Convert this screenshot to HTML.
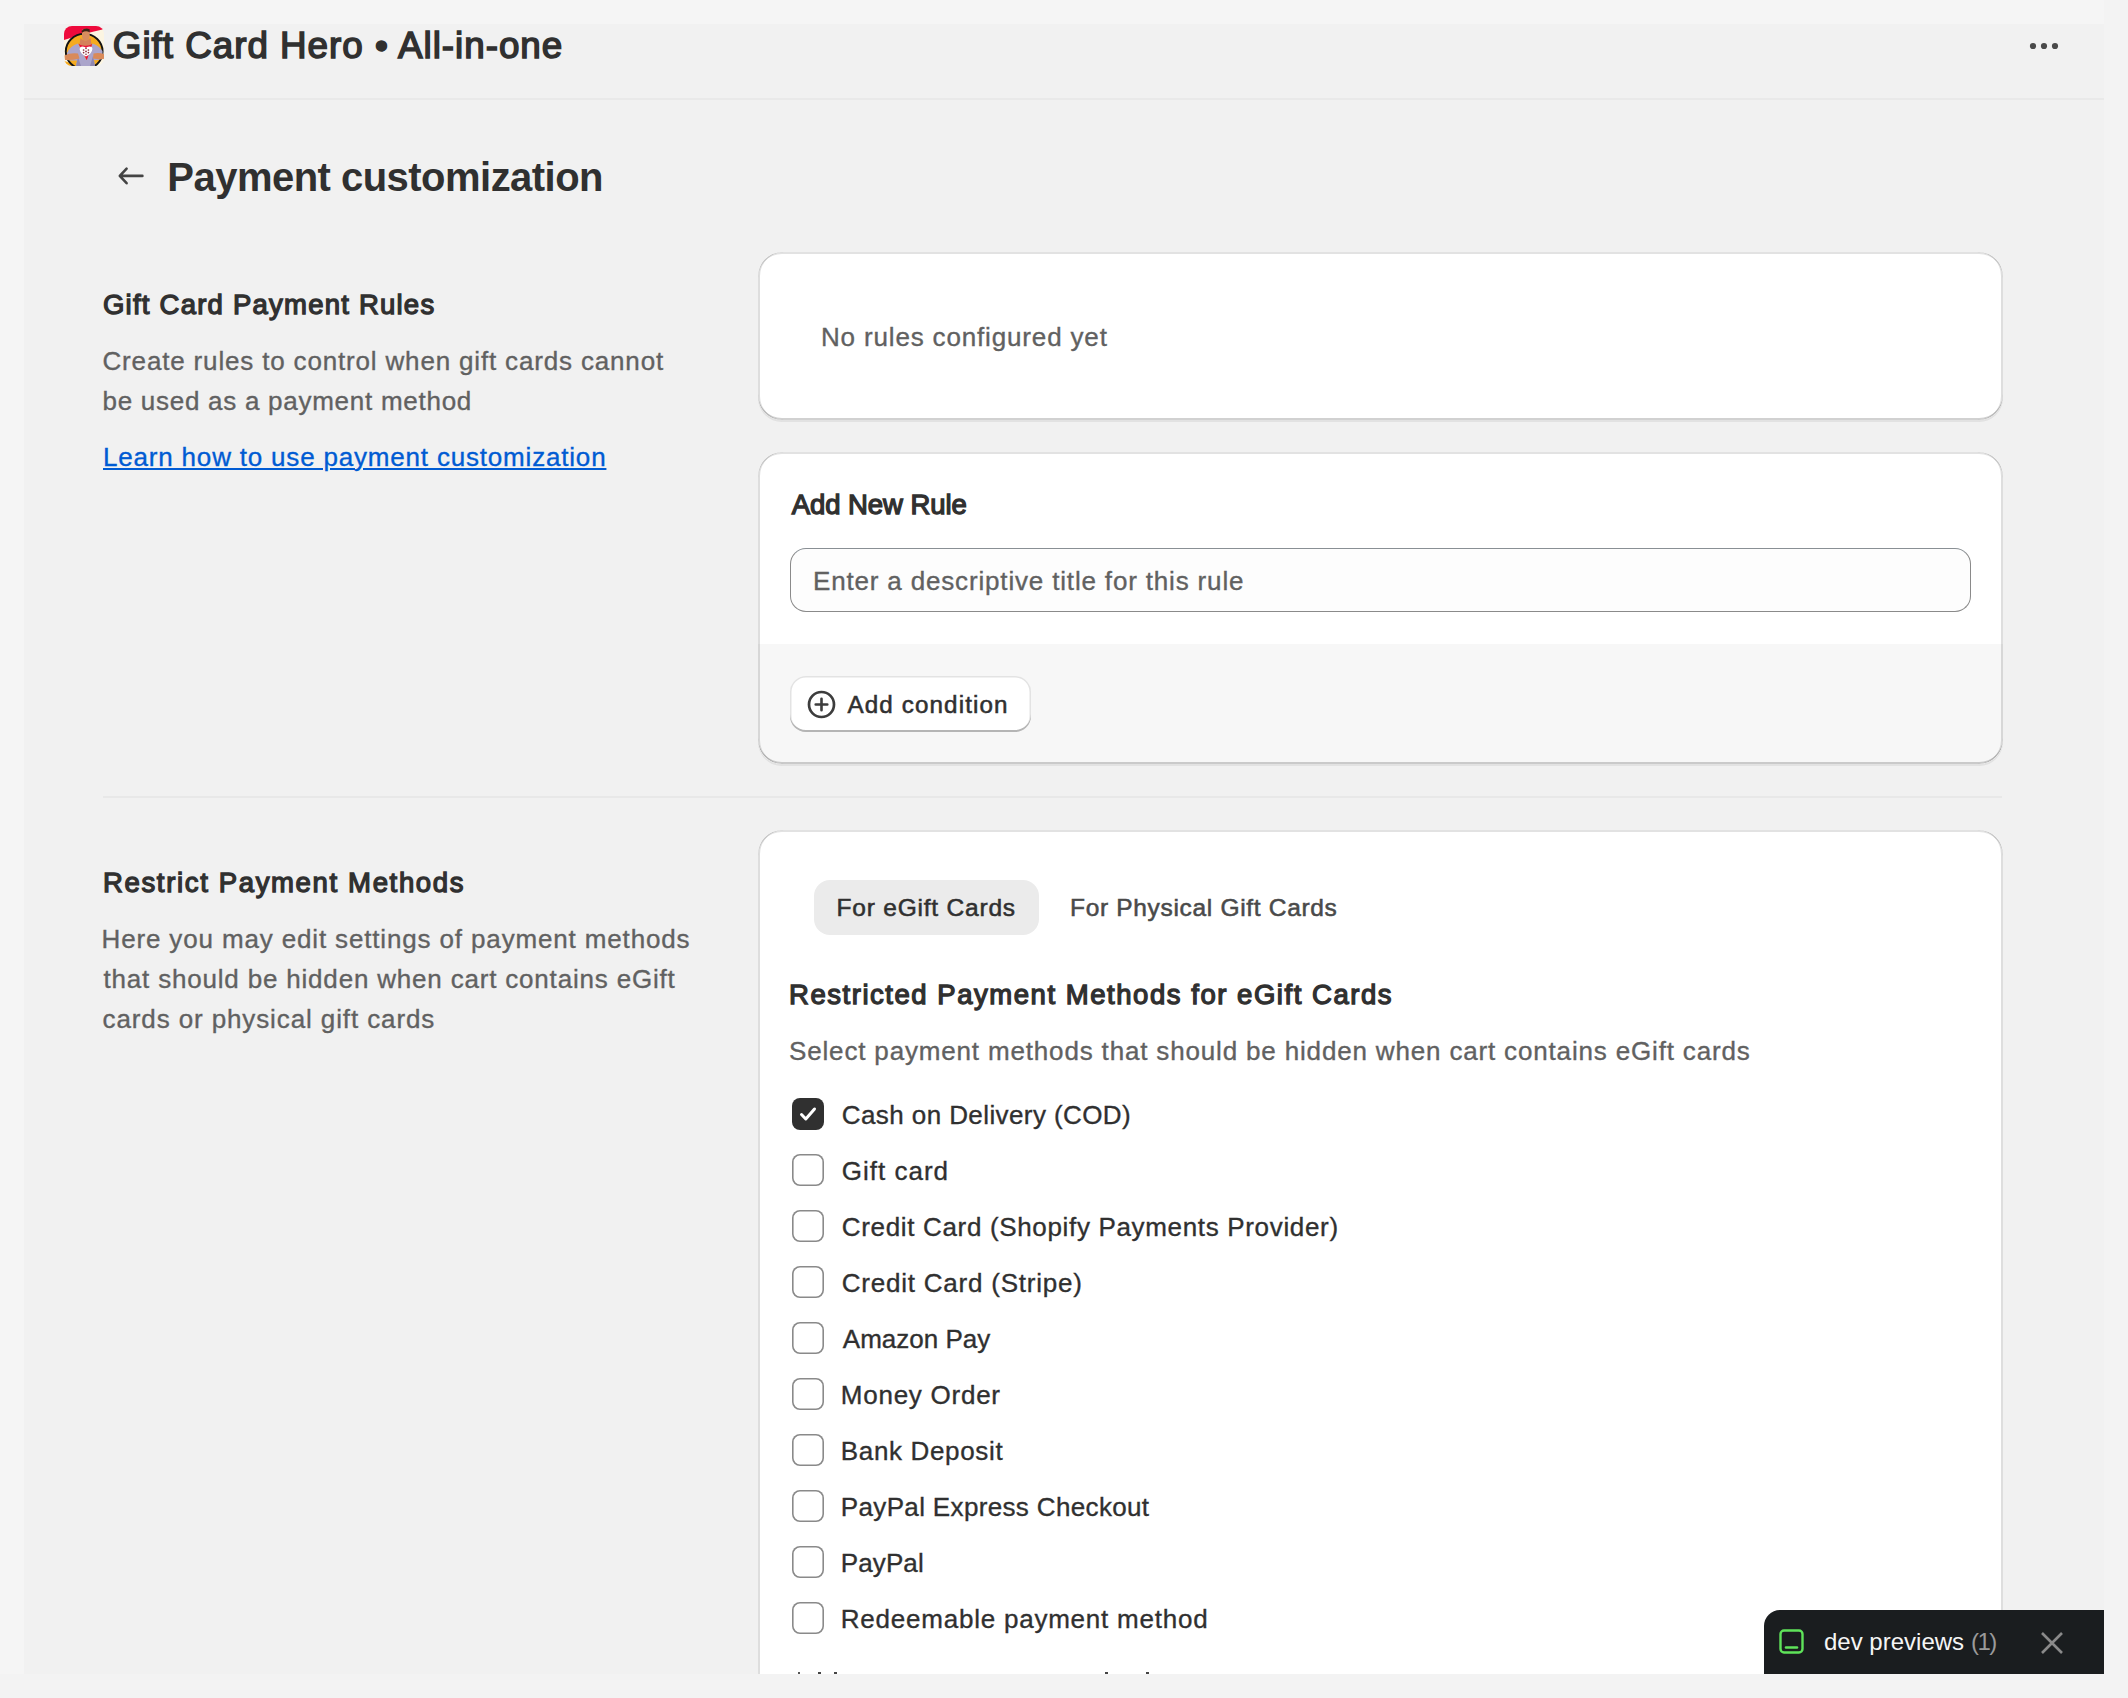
<!DOCTYPE html>
<html>
<head>
<meta charset="utf-8">
<style>
html,body{margin:0;padding:0;}
body{width:2128px;height:1698px;overflow:hidden;background:#f5f5f5;font-family:"Liberation Sans",sans-serif;position:relative;}
.frame{position:absolute;left:24px;top:24px;width:2080px;height:1650px;background:#f1f1f1;}
.t{position:absolute;white-space:nowrap;line-height:1;}
.hdrline{position:absolute;left:24px;top:98px;width:2080px;height:2px;background:#e9e9e9;}
.card{position:absolute;left:758px;width:1245px;background:#fff;border-radius:24px;box-shadow:0 2px 0 0 rgba(26,26,26,.07);overflow:hidden;}
.card::after{content:"";position:absolute;inset:0;border-radius:24px;pointer-events:none;
 box-shadow:inset 2px 0 0 0 rgba(0,0,0,.13),inset -2px 0 0 0 rgba(0,0,0,.13),inset 0 -2px 0 0 rgba(0,0,0,.18),inset 0 2px 0 0 rgba(190,190,190,.45);}
.cb{position:absolute;left:792px;width:32px;height:32px;box-sizing:border-box;box-shadow:inset 0 0 0 1.6px #8a8a8a;border-radius:8px;background:#fff;}
</style>
</head>
<body>
<div class="frame"></div>
<div class="hdrline"></div>

<!-- app icon -->
<svg style="position:absolute;left:64px;top:26px" width="40" height="40" viewBox="0 0 40 40">
 <defs><clipPath id="rc"><rect x="0" y="0" width="40" height="40" rx="8"/></clipPath></defs>
 <g clip-path="url(#rc)">
  <rect width="40" height="40" fill="#fcf5e2"/>
  <path d="M0 0H40V2.5L38.5 3.5Q22 7 0 14Z" fill="#ee0a3c"/>
  <path d="M0 35Q6 36 9 40H0Z" fill="#f5ab1f"/>
  <ellipse cx="20.2" cy="25.5" rx="18.4" ry="17.6" fill="#f5ab1f" stroke="#141414" stroke-width="1.9"/>
  <path d="M3 27Q6 20 14 17.5L22.5 34L28.5 17.5Q35 19.5 38.5 25L38.5 33Q33 34.5 30 34L31 40H12L13 34.5Q7 34.5 3 34Z" fill="#aba5cb"/>
  <path d="M12 40L14 31L17 40Z" fill="#8f88b0"/>
  <path d="M31 40L29 30L26 40Z" fill="#8f88b0"/>
  <path d="M14.5 17.8Q21 20.5 28.2 17.8L22.8 34.2Z" fill="#ea1238"/>
  <path d="M15.6 23Q15.8 20.6 18.5 20.6Q21.3 20.8 22 22Q22.7 20.8 25.5 20.6Q28.3 20.6 28.4 23Q28 27.5 22 30.6Q16 27.5 15.6 23Z" fill="#fff"/>
  <g fill="#8a2a3a"><circle cx="22" cy="22.5" r="0.8"/><circle cx="19.6" cy="24" r="0.85"/><circle cx="24.4" cy="24" r="0.85"/><circle cx="22" cy="25.4" r="0.9"/><circle cx="19.6" cy="26.6" r="0.85"/><circle cx="24.4" cy="26.6" r="0.85"/><circle cx="22" cy="28.2" r="0.8"/></g>
  <path d="M16.5 12Q21 17 26.5 12L27.5 18.5Q21 21 15.5 18.5Z" fill="#d5805a"/>
  <path d="M18 4Q21.5 1.8 25 3.8L25.8 10Q25 14.5 21.5 15Q18.5 14.5 18 11Z" fill="#d98c5e"/>
  <path d="M17.5 5Q21 1 25.8 3.6L25.6 6.2Q21.5 4.2 18 6.8Z" fill="#3a2418"/>
  <path d="M0.5 29.5Q6 26.5 14 27.5L15.5 32.5Q8 34.5 1 34Z" fill="#d98a5a"/>
  <path d="M40 28Q35 26.5 29.5 27.5L29 32.5Q35 33.5 40 33Z" fill="#d98a5a"/>
 </g>
</svg>
<!-- dots -->
<svg style="position:absolute;left:2026px;top:39px" width="36" height="14" viewBox="0 0 36 14">
 <circle cx="7" cy="7" r="3.1" fill="#4a4a4a"/><circle cx="18" cy="7" r="3.1" fill="#4a4a4a"/><circle cx="29" cy="7" r="3.1" fill="#4a4a4a"/>
</svg>

<!-- back arrow -->
<svg style="position:absolute;left:112px;top:160px" width="38" height="32" viewBox="0 0 38 32">
 <path d="M30.4 15.9 H8.5 M14.6 8.6 L7.8 15.9 L14.6 23.2" fill="none" stroke="#444" stroke-width="2.6" stroke-linecap="round" stroke-linejoin="round"/>
</svg>

<!-- card 1 -->
<div class="card" style="top:252px;height:168px;"></div>

<!-- card 2 -->
<div class="card" style="top:452px;height:312px;">
 <div style="position:absolute;left:32px;top:96px;width:1181px;height:64px;box-sizing:border-box;border:1.3px solid #8a8a8a;border-top-color:#898f94;border-radius:16px;background:#fdfdfd;"></div>
 <div style="position:absolute;left:0;top:192px;width:100%;height:120px;background:#f7f7f7;"></div>
 <div style="position:absolute;left:32px;top:224px;width:241px;height:56px;box-sizing:border-box;background:#fff;border-radius:16px;box-shadow:inset 0 -2px 0 0 #b5b5b5,inset 0 0 0 1.5px #e3e3e3;"></div>
 <svg style="position:absolute;left:49px;top:237.5px" width="29" height="29" viewBox="0 0 29 29">
  <circle cx="14.5" cy="14.5" r="12.5" fill="none" stroke="#3d3d3d" stroke-width="2.7"/>
  <path d="M14.5 8.7V20.3M8.7 14.5H20.3" stroke="#3d3d3d" stroke-width="2.6" stroke-linecap="round"/>
 </svg>
</div>

<!-- divider -->
<div style="position:absolute;left:103px;top:796px;width:1899px;height:2px;background:#e8e8e8"></div>

<!-- card 3 -->
<div class="card" style="top:830px;height:1000px;">
 <div style="position:absolute;left:56px;top:50px;width:225px;height:55px;background:#ebebeb;border-radius:16px"></div>
</div>

<!-- checkboxes -->
<div class="cb" style="top:1098px;background:#303030;box-shadow:none"></div>
<svg style="position:absolute;left:792px;top:1098px" width="32" height="32" viewBox="0 0 32 32"><path d="M9.5 16.5 L13.8 21 L22.5 11" fill="none" stroke="#fff" stroke-width="3" stroke-linecap="round" stroke-linejoin="round"/></svg>
<div class="cb" style="top:1154px"></div>
<div class="cb" style="top:1210px"></div>
<div class="cb" style="top:1266px"></div>
<div class="cb" style="top:1322px"></div>
<div class="cb" style="top:1378px"></div>
<div class="cb" style="top:1434px"></div>
<div class="cb" style="top:1490px"></div>
<div class="cb" style="top:1546px"></div>
<div class="cb" style="top:1602px"></div>

<div class="t" style="left:112.8px;top:28.05px;font-size:36.8px;font-weight:400;-webkit-text-stroke:1.5px currentColor;color:#303030;letter-spacing:0.981px;">Gift Card Hero • All-in-one</div>
<div class="t" style="left:167.3px;top:157.34px;font-size:40px;font-weight:700;color:#303030;letter-spacing:-0.525px;">Payment customization</div>
<div class="t" style="left:103.0px;top:290.72px;font-size:27.5px;font-weight:400;-webkit-text-stroke:1.3px currentColor;color:#303030;letter-spacing:1.227px;">Gift Card Payment Rules</div>
<div class="t" style="left:102.5px;top:347.99px;font-size:26px;font-weight:400;-webkit-text-stroke:0.35px currentColor;color:#616161;letter-spacing:0.833px;">Create rules to control when gift cards cannot</div>
<div class="t" style="left:102.5px;top:387.99px;font-size:26px;font-weight:400;-webkit-text-stroke:0.35px currentColor;color:#616161;letter-spacing:0.731px;">be used as a payment method</div>
<div class="t" style="left:103.0px;top:443.99px;font-size:26px;font-weight:400;-webkit-text-stroke:0.35px currentColor;color:#005bd3;letter-spacing:0.811px;text-decoration:underline;text-decoration-thickness:2px;text-underline-offset:2px;">Learn how to use payment customization</div>
<div class="t" style="left:821.0px;top:323.99px;font-size:26px;font-weight:400;-webkit-text-stroke:0.35px currentColor;color:#616161;letter-spacing:0.841px;">No rules configured yet</div>
<div class="t" style="left:791.8px;top:490.72px;font-size:27.5px;font-weight:400;-webkit-text-stroke:1.3px currentColor;color:#303030;letter-spacing:-0.073px;">Add New Rule</div>
<div class="t" style="left:813.0px;top:568.49px;font-size:26px;font-weight:400;-webkit-text-stroke:0.35px currentColor;color:#616161;letter-spacing:0.832px;">Enter a descriptive title for this rule</div>
<div class="t" style="left:847.4px;top:692.51px;font-size:24.2px;font-weight:400;-webkit-text-stroke:0.55px currentColor;color:#303030;letter-spacing:1.133px;">Add condition</div>
<div class="t" style="left:103.0px;top:868.72px;font-size:27.5px;font-weight:400;-webkit-text-stroke:1.3px currentColor;color:#303030;letter-spacing:1.652px;">Restrict Payment Methods</div>
<div class="t" style="left:101.5px;top:926.49px;font-size:26px;font-weight:400;-webkit-text-stroke:0.35px currentColor;color:#616161;letter-spacing:0.852px;">Here you may edit settings of payment methods</div>
<div class="t" style="left:103.5px;top:965.99px;font-size:26px;font-weight:400;-webkit-text-stroke:0.35px currentColor;color:#616161;letter-spacing:0.811px;">that should be hidden when cart contains eGift</div>
<div class="t" style="left:102.5px;top:1005.99px;font-size:26px;font-weight:400;-webkit-text-stroke:0.35px currentColor;color:#616161;letter-spacing:0.889px;">cards or physical gift cards</div>
<div class="t" style="left:836.6px;top:896.26px;font-size:24.5px;font-weight:400;-webkit-text-stroke:0.55px currentColor;color:#303030;letter-spacing:0.786px;">For eGift Cards</div>
<div class="t" style="left:1070.0px;top:896.26px;font-size:24.5px;font-weight:400;-webkit-text-stroke:0.55px currentColor;color:#4a4a4a;letter-spacing:0.682px;">For Physical Gift Cards</div>
<div class="t" style="left:789.0px;top:981.22px;font-size:27.5px;font-weight:400;-webkit-text-stroke:1.3px currentColor;color:#303030;letter-spacing:1.537px;">Restricted Payment Methods for eGift Cards</div>
<div class="t" style="left:789.0px;top:1037.99px;font-size:26px;font-weight:400;-webkit-text-stroke:0.35px currentColor;color:#616161;letter-spacing:0.835px;">Select payment methods that should be hidden when cart contains eGift cards</div>
<div class="t" style="left:841.8px;top:1102.49px;font-size:26px;font-weight:400;-webkit-text-stroke:0.35px currentColor;color:#303030;letter-spacing:0.41px;">Cash on Delivery (COD)</div>
<div class="t" style="left:841.8px;top:1158.49px;font-size:26px;font-weight:400;-webkit-text-stroke:0.35px currentColor;color:#303030;letter-spacing:1.0px;">Gift card</div>
<div class="t" style="left:841.8px;top:1214.49px;font-size:26px;font-weight:400;-webkit-text-stroke:0.35px currentColor;color:#303030;letter-spacing:0.663px;">Credit Card (Shopify Payments Provider)</div>
<div class="t" style="left:841.8px;top:1270.49px;font-size:26px;font-weight:400;-webkit-text-stroke:0.35px currentColor;color:#303030;letter-spacing:0.774px;">Credit Card (Stripe)</div>
<div class="t" style="left:842.8px;top:1326.49px;font-size:26px;font-weight:400;-webkit-text-stroke:0.35px currentColor;color:#303030;letter-spacing:0.0px;">Amazon Pay</div>
<div class="t" style="left:840.8px;top:1382.49px;font-size:26px;font-weight:400;-webkit-text-stroke:0.35px currentColor;color:#303030;letter-spacing:0.75px;">Money Order</div>
<div class="t" style="left:840.8px;top:1438.49px;font-size:26px;font-weight:400;-webkit-text-stroke:0.35px currentColor;color:#303030;letter-spacing:0.655px;">Bank Deposit</div>
<div class="t" style="left:840.8px;top:1494.49px;font-size:26px;font-weight:400;-webkit-text-stroke:0.35px currentColor;color:#303030;letter-spacing:0.35px;">PayPal Express Checkout</div>
<div class="t" style="left:840.8px;top:1550.49px;font-size:26px;font-weight:400;-webkit-text-stroke:0.35px currentColor;color:#303030;letter-spacing:0.1px;">PayPal</div>
<div class="t" style="left:840.8px;top:1606.49px;font-size:26px;font-weight:400;-webkit-text-stroke:0.35px currentColor;color:#303030;letter-spacing:0.771px;">Redeemable payment method</div>
<div style="position:absolute;left:798px;top:1672px;width:2px;height:2px;background:#555"></div><div style="position:absolute;left:818px;top:1672px;width:3px;height:2px;background:#444"></div><div style="position:absolute;left:834px;top:1672px;width:3px;height:2px;background:#444"></div><div style="position:absolute;left:1105px;top:1672px;width:3px;height:2px;background:#444"></div><div style="position:absolute;left:1146px;top:1672px;width:3px;height:2px;background:#444"></div>

<!-- bottom outer strip -->
<div style="position:absolute;left:0;top:1674px;width:2128px;height:24px;background:#f3f3f3"></div>
<div style="position:absolute;left:2104px;top:0;width:24px;height:1698px;background:#f3f3f3"></div>

<!-- dev previews -->
<div style="position:absolute;left:1764px;top:1610px;width:340px;height:64px;background:#1a1d1f;border-top-left-radius:16px"></div>
<svg style="position:absolute;left:1778px;top:1628px" width="28" height="28" viewBox="0 0 28 28">
 <rect x="2.5" y="2.5" width="22" height="22" rx="3.5" fill="none" stroke="#5fe35a" stroke-width="2.4"/>
 <path d="M8 19.5H19" stroke="#5fe35a" stroke-width="2.6" stroke-linecap="round"/>
</svg>
<div class="t" style="left:1824px;top:1630px;font-size:24px;color:#f5f5f5;letter-spacing:0px">dev previews</div>
<div class="t" style="left:1971px;top:1630px;font-size:24px;color:#9a9a9a;letter-spacing:-1.5px">(1)</div>
<svg style="position:absolute;left:2039px;top:1630px" width="26" height="26" viewBox="0 0 26 26">
 <path d="M3 3L23 23M23 3L3 23" stroke="#8a8a8a" stroke-width="2.6"/>
</svg>
</body>
</html>
